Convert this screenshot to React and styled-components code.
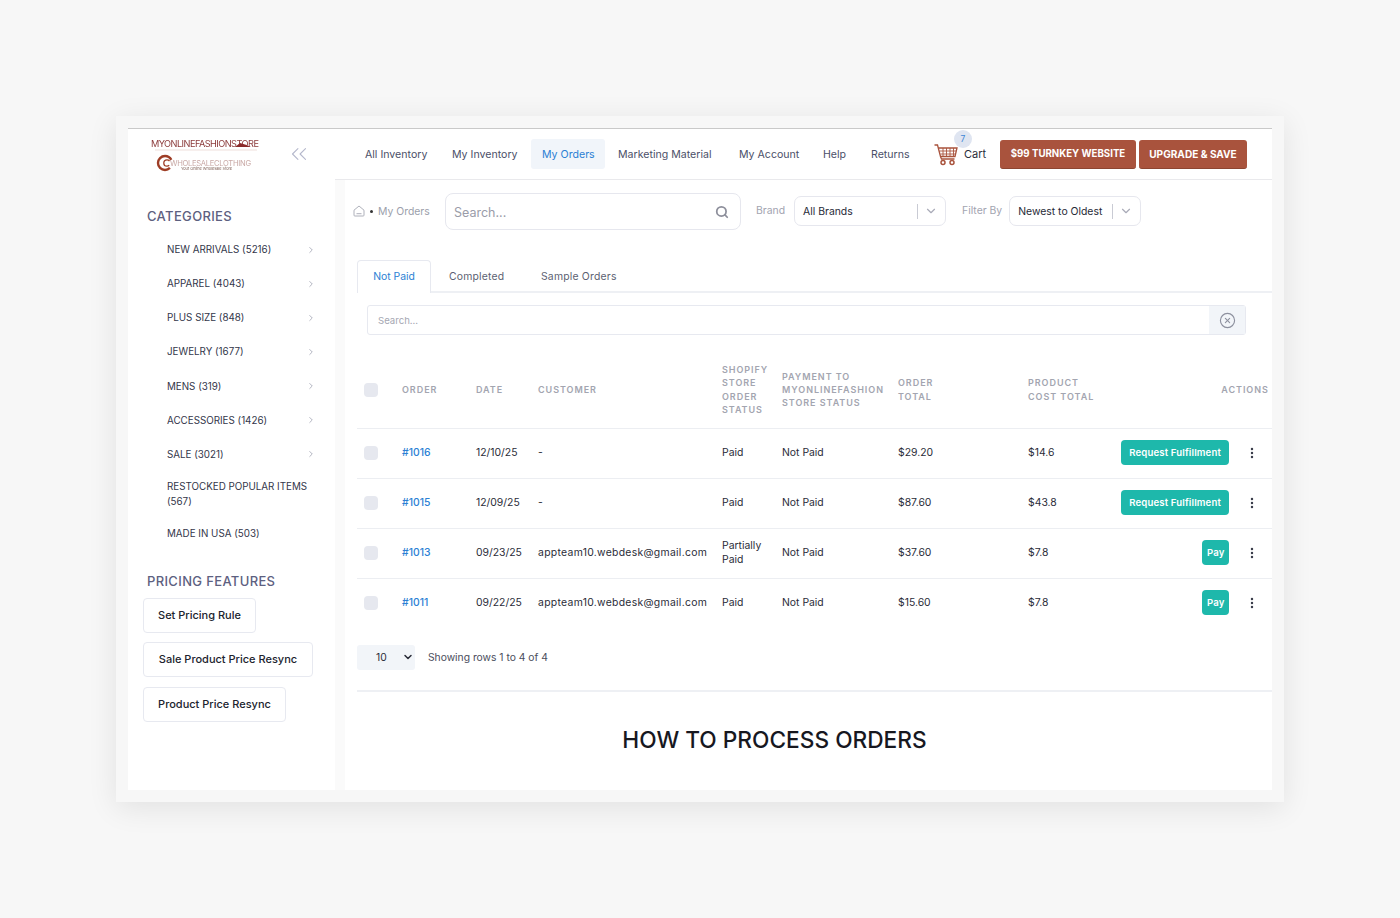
import React from "react";
import styled, { createGlobalStyle } from "styled-components";
import { ChevronRight, ChevronDown, ChevronsLeft, Search, CircleX, EllipsisVertical } from "lucide-react";

const GlobalStyle = createGlobalStyle`
  html, body {
    margin: 0;
    padding: 0;
    background: #f7f7f7;
    font-family: "Inter", "Liberation Sans", sans-serif;
    color: #1f2430;
  }
  * { box-sizing: border-box; }
`;

const Page = styled.div`
  width: 1400px;
  height: 918px;
  padding: 116px;
`;

const Frame = styled.div`
  height: 686px;
  padding: 12px;
  background: #f7f7f7;
  box-shadow: 0 6px 28px rgba(0, 0, 0, 0.09);
`;

const Shell = styled.div`
  height: 662px;
  display: flex;
  background: #fff;
  border-top: 1px solid #c9c9c9;
`;

const Sidebar = styled.aside`
  width: 207px;
  flex: none;
  background: #fff;
  padding-left: 15px;
`;

const LogoRow = styled.div`
  height: 50px;
  padding: 8px 0 0 8px;
  display: flex;
  align-items: flex-start;
`;

const Collapse = styled.div`
  margin: 4px 0 0 23px;
  color: #b5b8cc;
  display: flex;
`;

const SideTitle = styled.h3`
  margin: ${(p) => p.$top}px 0 0 4px;
  font-size: 13px;
  line-height: 20px;
  font-weight: 500;
  letter-spacing: 0.35px;
  color: #5d6080;
`;

const CatList = styled.ul`
  list-style: none;
  margin: 6.5px 0 0;
  padding: 0 19px 0 24px;
`;

const CatItem = styled.li`
  display: flex;
  align-items: center;
  justify-content: space-between;
  min-height: 34.15px;
  font-size: 9.8px;
  line-height: 15px;
  color: #33364a;
  svg { color: #a3a6b5; flex: none; }
`;

const TallItem = styled(CatItem)`
  padding: 5px 0 7px;
  width: 150px;
  margin-top: 3px;
`;

const SideButtons = styled.div`
  display: flex;
  flex-direction: column;
  align-items: flex-start;
  margin-top: 7.25px;
`;

const SideButton = styled.button`
  height: 35px;
  width: ${(p) => p.$w}px;
  margin-bottom: 9.6px;
  padding: 0 0 1px;
  text-align: center;
  font: 500 11px "Inter", sans-serif;
  color: #20232e;
  background: #fff;
  border: 1px solid #e7e9f0;
  border-radius: 4px;
`;

const Main = styled.main`
  flex: 1;
  min-width: 0;
  display: flex;
  flex-direction: column;
`;

const TopBar = styled.header`
  height: 51px;
  flex: none;
  display: flex;
  align-items: center;
  padding-left: 30px;
  border-bottom: 1px solid #e9e9ec;
`;

const NavLink = styled.a`
  height: 30px;
  display: flex;
  align-items: center;
  flex: none;
  white-space: nowrap;
  width: ${(p) => p.$w}px;
  padding-left: ${(p) => (p.$active ? 11 : 0)}px;
  margin-right: ${(p) => p.$gap}px;
  font-size: 10.6px;
  font-weight: 400;
  border-radius: 3px;
  color: ${(p) => (p.$active ? "#2b7fd4" : "#4b4f68")};
  background: ${(p) => (p.$active ? "#f1f5fa" : "transparent")};
`;

const CartWrap = styled.div`
  position: relative;
  display: flex;
  align-items: center;
  flex: none;
  width: 66px;
  font-size: 11px;
  font-weight: 400;
  color: #2a2d3a;
  gap: 6px;
`;

const CartBadge = styled.span`
  position: absolute;
  left: 20px;
  top: -12px;
  width: 18px;
  height: 18px;
  border-radius: 50%;
  background: #dfe5f1;
  color: #3d86d6;
  font-size: 8.5px;
  text-align: center;
  line-height: 18px;
`;

const PromoButton = styled.button`
  height: 29px;
  width: ${(p) => p.$w}px;
  flex: none;
  margin-right: 3px;
  padding: 0;
  border: 0;
  border-bottom: 1px solid #8d4531;
  border-radius: 3px;
  background: #a9533d;
  color: #fff;
  font: 700 ${(p) => p.$size}px "Inter", sans-serif;
  white-space: nowrap;
`;

const Body = styled.div`
  flex: 1;
  display: flex;
  background: #fafafa;
  padding-left: 10px;
`;

const Content = styled.div`
  flex: 1;
  min-width: 0;
  background: #fff;
  display: flex;
  flex-direction: column;
`;

const Toolbar = styled.div`
  height: 80px;
  flex: none;
  display: flex;
  align-items: flex-start;
  padding: 13px 0 0 8px;
`;

const Crumb = styled.div`
  width: 92px;
  height: 36px;
  display: flex;
  align-items: center;
  gap: 5px;
  font-size: 10.4px;
  color: #9c9fac;
  svg { flex: none; }
`;

const Dot = styled.i`
  width: 3px;
  height: 3px;
  background: #333;
  border-radius: 50%;
`;

const SearchBox = styled.div`
  width: 296px;
  height: 37px;
  display: flex;
  align-items: center;
  justify-content: space-between;
  padding: 1px 11px 0 8px;
  border: 1px solid #e6e7ee;
  border-radius: 8px;
  font-size: 12.5px;
  color: #9a9ca9;
  svg { color: #8d8f9b; }
`;

const FilterLabel = styled.span`
  margin: 3px ${(p) => p.$right}px 0 ${(p) => p.$left}px;
  line-height: 30px;
  font-size: 10.4px;
  color: #a2a4b0;
`;

const SelectBox = styled.div`
  width: ${(p) => p.$w}px;
  height: 30px;
  margin-top: 3px;
  display: flex;
  align-items: center;
  padding-left: 8px;
  border: 1px solid #e6e7ee;
  border-radius: 7px;
  font-size: 10.4px;
  color: #262936;
  span { flex: 1; white-space: nowrap; }
  svg { color: #a9abb8; margin: 0 7px 0 6px; flex: none; }
`;

const SelectDivider = styled.i`
  width: 1px;
  height: 15px;
  background: #c9cbd4;
  flex: none;
`;

const TabBar = styled.div`
  height: 33px;
  flex: none;
  display: flex;
  margin-left: 12px;
  border-bottom: 2px solid #eef0f4;
`;

const Tab = styled.div`
  width: ${(p) => p.$w}px;
  height: 33px;
  display: flex;
  align-items: center;
  justify-content: ${(p) => (p.$active ? "center" : "flex-start")};
  padding: 0 0 1px ${(p) => (p.$active ? 0 : 18)}px;
  font-size: 10.4px;
  letter-spacing: ${(p) => (p.$active ? 0 : 0.2)}px;
  font-weight: 400;
  color: ${(p) => (p.$active ? "#2b7fd4" : "#5c5f72")};
  background: ${(p) => (p.$active ? "#fff" : "transparent")};
  border: ${(p) => (p.$active ? "1px solid #e7e9f0" : "0")};
  border-bottom: 0;
  border-radius: 4px 4px 0 0;
`;

const TableSearch = styled.div`
  flex: none;
  display: flex;
  height: 30px;
  width: 879px;
  margin: 12px 0 0 22px;
  border: 1px solid #e7e9f0;
  border-radius: 3px;
`;

const TableSearchInput = styled.div`
  flex: 1;
  padding-left: 10px;
  line-height: 29px;
  font-size: 9.6px;
  color: #a5a7b2;
`;

const ClearButton = styled.div`
  width: 36px;
  display: flex;
  align-items: center;
  justify-content: center;
  padding-left: 1px;
  background: #f2f5f9;
  color: #8d909e;
`;

const OrdersTable = styled.table`
  width: 915px;
  margin: 22px 0 0 12px;
  border-collapse: collapse;
  table-layout: fixed;
  flex: none;
`;

const HeadCell = styled.th`
  height: 71px;
  padding: 0 0 5px;
  text-align: ${(p) => p.$align || "left"};
  vertical-align: middle;
  white-space: ${(p) => (p.$nowrap ? "nowrap" : "normal")};
  font-size: 9px;
  line-height: 13.4px;
  font-weight: 600;
  letter-spacing: 0.95px;
  color: #a3a5b0;
  border-bottom: 1px solid #eceef2;
`;

const Cell = styled.td`
  height: 50px;
  padding: 0;
  font-size: 10.4px;
  line-height: 14px;
  letter-spacing: ${(p) => (p.$wide ? 0.3 : 0)}px;
  color: #2a2c38;
  border-bottom: ${(p) => (p.$last ? "0" : "1px solid #eceef2")};
`;

const Check = styled.span`
  display: block;
  width: 14px;
  height: 14px;
  margin-left: 7px;
  border-radius: 4px;
  background: #e6e8ef;
`;

const OrderLink = styled.a`
  color: #2b7fd4;
  font-weight: 500;
`;

const ActionWrap = styled.div`
  display: flex;
  align-items: center;
  justify-content: flex-end;
  margin-top: -1px;
  padding-right: 13px;
  gap: 16px;
  svg { color: #3a3d4b; flex: none; }
`;

const TealButton = styled.button`
  height: 25px;
  padding: 0 ${(p) => (p.$compact ? 4.5 : 8)}px;
  border: 0;
  border-radius: 4px;
  background: #1eb8ab;
  color: #fff;
  font: 600 9.6px "Inter", sans-serif;
  letter-spacing: 0.15px;
  white-space: nowrap;
`;

const Footer = styled.div`
  flex: none;
  height: 64px;
  margin-left: 12px;
  padding: 1px 0 5px;
  display: flex;
  align-items: center;
  gap: 13px;
  border-bottom: 2px solid #eef0f4;
  font-size: 10.3px;
  color: #4a4d5c;
`;

const PageSize = styled.div`
  width: 58px;
  height: 25px;
  display: flex;
  align-items: center;
  justify-content: space-between;
  padding: 0 1px 0 19px;
  background: #f2f5f9;
  border-radius: 3px;
  color: #2a2c38;
`;

const Heading = styled.h2`
  margin: 33px 80px 0 12px;
  text-align: center;
  font-size: 22.7px;
  line-height: 30px;
  font-weight: 500;
  color: #17181f;
`;

const LogoMark = () => (
  <svg width="112" height="42" viewBox="0 0 112 42">
    <defs>
      <filter id="soft">
        <feGaussianBlur stdDeviation="0.3" />
      </filter>
    </defs>
    <g filter="url(#soft)">
      <text x="0" y="10" fontFamily="Inter, sans-serif" fontSize="9.2" letterSpacing="-0.55" fill="#8c3b3b">MYONLINEFASHIONSTORE</text>
      <line x1="4" y1="13" x2="106" y2="13" stroke="#e3c9c4" strokeWidth="0.6" />
      <path d="M84 10l5-4 5 1.500 6 2.500H84z" fill="#8b2a2a" />
      <circle cx="14" cy="26" r="7" fill="none" stroke="#9e3d26" strokeWidth="2.4" strokeDasharray="35 9" strokeDashoffset="-5.500" />
      <circle cx="16" cy="26" r="3.200" fill="none" stroke="#9e3d26" strokeWidth="1.300" strokeDasharray="15 5" strokeDashoffset="-2.500" />
      <text x="19" y="28.500" fontFamily="Inter, sans-serif" fontSize="7.600" letterSpacing="-0.3" fill="#c9a9a6">WHOLESALECLOTHING</text>
      <text x="30" y="32.500" fontFamily="Inter, sans-serif" fontSize="3.800" fill="#7a5a50">Your Online Wholesale Store</text>
    </g>
  </svg>
);

const CartIcon = () => (
  <svg width="24" height="24" viewBox="0 0 24 24" fill="none" stroke="#a9533d">
    <path d="M0.500 3h3l3 11.500h14.500l2-8.500H4.500" strokeWidth="1.300" />
    <path d="M5.500 9h16.500M6.500 12h15M9 6v8.500M12.500 6v8.500M16 6v8.500M19.500 6v8.500" strokeWidth="0.900" />
    <path d="M6.500 14.500l1 2.500h13" strokeWidth="1.300" />
    <circle cx="9" cy="20.500" r="2" strokeWidth="1.500" />
    <circle cx="18" cy="20.500" r="2" strokeWidth="1.500" />
  </svg>
);

const HomeIcon = () => (
  <svg width="12" height="12" viewBox="0 0 12 12" fill="none" stroke="#a5a7b2" strokeWidth="0.9">
    <path d="M1 5.200L6 1l5 4.200V10.200a.8.8 0 0 1-.8.8H1.800a.8.8 0 0 1-.8-.8z" />
    <path d="M3.500 8.700h5" />
  </svg>
);

const navItems = [
  { label: "All Inventory", w: 63, gap: 24 },
  { label: "My Inventory", w: 66, gap: 13 },
  { label: "My Orders", w: 74, gap: 13, active: true },
  { label: "Marketing Material", w: 97, gap: 24 },
  { label: "My Account", w: 60, gap: 24 },
  { label: "Help", w: 24, gap: 24 },
  { label: "Returns", w: 40, gap: 23 },
];

const categories = [
  "NEW ARRIVALS (5216)",
  "APPAREL (4043)",
  "PLUS SIZE (848)",
  "JEWELRY (1677)",
  "MENS (319)",
  "ACCESSORIES (1426)",
  "SALE (3021)",
];

const orders = [
  { id: "#1016", date: "12/10/25", customer: "-", store: "Paid", total: "$29.20", cost: "$14.6", action: "Request Fulfillment" },
  { id: "#1015", date: "12/09/25", customer: "-", store: "Paid", total: "$87.60", cost: "$43.8", action: "Request Fulfillment" },
  { id: "#1013", date: "09/23/25", customer: "appteam10.webdesk@gmail.com", store: "Partially Paid", total: "$37.60", cost: "$7.8", action: "Pay" },
  { id: "#1011", date: "09/22/25", customer: "appteam10.webdesk@gmail.com", store: "Paid", total: "$15.60", cost: "$7.8", action: "Pay" },
];

const columns = [45, 74, 62, 184, 60, 116, 130, 64, 180];

export default function App() {
  return (
    <>
      <GlobalStyle />
      <Page>
        <Frame>
          <Shell>
            <Sidebar>
              <LogoRow>
                <LogoMark />
                <Collapse>
                  <ChevronsLeft size={26} strokeWidth={1} />
                </Collapse>
              </LogoRow>
              <SideTitle $top={27}>CATEGORIES</SideTitle>
              <CatList>
                {categories.map((c) => (
                  <CatItem key={c}>
                    {c}
                    <ChevronRight size={10} />
                  </CatItem>
                ))}
                <TallItem>RESTOCKED POPULAR ITEMS (567)</TallItem>
                <CatItem>MADE IN USA (503)</CatItem>
              </CatList>
              <SideTitle $top={20}>PRICING FEATURES</SideTitle>
              <SideButtons>
                <SideButton $w={113}>Set Pricing Rule</SideButton>
                <SideButton $w={170}>Sale Product Price Resync</SideButton>
                <SideButton $w={143}>Product Price Resync</SideButton>
              </SideButtons>
            </Sidebar>
            <Main>
              <TopBar>
                {navItems.map((n) => (
                  <NavLink key={n.label} $w={n.w} $gap={n.gap} $active={n.active}>
                    {n.label}
                  </NavLink>
                ))}
                <CartWrap>
                  <CartIcon />
                  <CartBadge>7</CartBadge>
                  Cart
                </CartWrap>
                <PromoButton $w={136} $size={9.7}>$99 TURNKEY WEBSITE</PromoButton>
                <PromoButton $w={108} $size={10.1}>UPGRADE &amp; SAVE</PromoButton>
              </TopBar>
              <Body>
                <Content>
                  <Toolbar>
                    <Crumb>
                      <HomeIcon />
                      <Dot />
                      My Orders
                    </Crumb>
                    <SearchBox>
                      Search...
                      <Search size={14} strokeWidth={3} />
                    </SearchBox>
                    <FilterLabel $left={15} $right={9}>Brand</FilterLabel>
                    <SelectBox $w={152}>
                      <span>All Brands</span>
                      <SelectDivider />
                      <ChevronDown size={14} />
                    </SelectBox>
                    <FilterLabel $left={16} $right={7}>Filter By</FilterLabel>
                    <SelectBox $w={132}>
                      <span>Newest to Oldest</span>
                      <SelectDivider />
                      <ChevronDown size={14} />
                    </SelectBox>
                  </Toolbar>
                  <TabBar>
                    <Tab $active $w={74}>Not Paid</Tab>
                    <Tab $w={92}>Completed</Tab>
                    <Tab $w={120}>Sample Orders</Tab>
                  </TabBar>
                  <TableSearch>
                    <TableSearchInput>Search...</TableSearchInput>
                    <ClearButton>
                      <CircleX size={17} strokeWidth={1.6} />
                    </ClearButton>
                  </TableSearch>
                  <OrdersTable>
                    <colgroup>
                      {columns.map((w, i) => (
                        <col key={i} style={{ width: w }} />
                      ))}
                    </colgroup>
                    <thead>
                      <tr>
                        <HeadCell><Check /></HeadCell>
                        <HeadCell>ORDER</HeadCell>
                        <HeadCell>DATE</HeadCell>
                        <HeadCell>CUSTOMER</HeadCell>
                        <HeadCell>SHOPIFY STORE ORDER STATUS</HeadCell>
                        <HeadCell>PAYMENT TO MYONLINEFASHION STORE STATUS</HeadCell>
                        <HeadCell>ORDER<br />TOTAL</HeadCell>
                        <HeadCell $nowrap>PRODUCT<br />COST TOTAL</HeadCell>
                        <HeadCell $align="right">ACTIONS&nbsp;</HeadCell>
                      </tr>
                    </thead>
                    <tbody>
                      {orders.map((o, i) => {
                        const last = i === orders.length - 1;
                        return (
                          <tr key={o.id}>
                            <Cell $last={last}><Check /></Cell>
                            <Cell $last={last}><OrderLink>{o.id}</OrderLink></Cell>
                            <Cell $last={last}>{o.date}</Cell>
                            <Cell $last={last} $wide>{o.customer}</Cell>
                            <Cell $last={last}>{o.store}</Cell>
                            <Cell $last={last}>Not Paid</Cell>
                            <Cell $last={last}>{o.total}</Cell>
                            <Cell $last={last}>{o.cost}</Cell>
                            <Cell $last={last}>
                              <ActionWrap>
                                <TealButton $compact={o.action === "Pay"}>{o.action}</TealButton>
                                <EllipsisVertical size={14} strokeWidth={2.2} />
                              </ActionWrap>
                            </Cell>
                          </tr>
                        );
                      })}
                    </tbody>
                  </OrdersTable>
                  <Footer>
                    <PageSize>
                      10
                      <ChevronDown size={12} strokeWidth={3} />
                    </PageSize>
                    Showing rows 1 to 4 of 4
                  </Footer>
                  <Heading>HOW TO PROCESS ORDERS</Heading>
                </Content>
              </Body>
            </Main>
          </Shell>
        </Frame>
      </Page>
    </>
  );
}
